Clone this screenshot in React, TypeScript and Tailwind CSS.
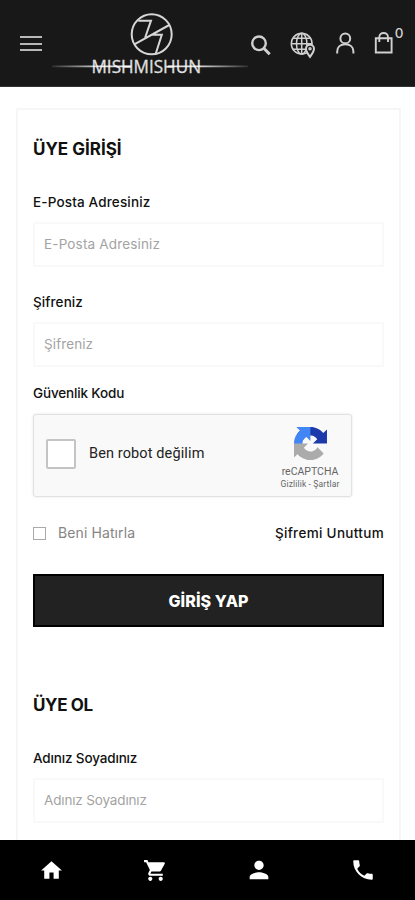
import type { ReactNode } from 'react';
import { MdHome, MdShoppingCart, MdPerson, MdPhone } from 'react-icons/md';

function Logo() {
  return (
    <svg width="196" height="86" viewBox="52 0 196 86" fill="none" className="shrink-0">
      <defs>
        <linearGradient id="streak" x1="52" x2="248" y1="0" y2="0" gradientUnits="userSpaceOnUse">
          <stop offset="0" stopColor="#fff" stopOpacity="0.1" />
          <stop offset="0.25" stopColor="#fff" stopOpacity="0.85" />
          <stop offset="0.75" stopColor="#fff" stopOpacity="0.85" />
          <stop offset="1" stopColor="#fff" stopOpacity="0.1" />
        </linearGradient>
      </defs>
      <g stroke="#d6d6d6" strokeWidth="2">
        <circle cx="151.7" cy="34.3" r="20" />
        <path d="M134.3 44.3L169.3 25M138.3 20.7H151L145 38M152 34.7H161.8L155.8 53.5" />
      </g>
      <text
        x="91.5"
        y="72.5"
        textLength="109.5"
        lengthAdjust="spacingAndGlyphs"
        fill="#e0e0e0"
        stroke="#e0e0e0"
        strokeWidth="0.3"
        fontSize="18"
        fontFamily='"Open Sans", sans-serif'
      >
        MISHMISHUN
      </text>
      <path d="M52 65.6H131V67.2H52zM168 65.6H248V67.2H168z" fill="url(#streak)" />
    </svg>
  );
}

function Header() {
  return (
    <header className="flex h-[87px] shrink-0 items-start border-b border-[#333] bg-[#181818]">
      <button className="mt-9 ml-5 flex w-[22px] flex-col gap-[4.5px]" aria-label="Menu">
        <span className="h-[2px] w-full bg-[#b8b8b8]" />
        <span className="h-[2px] w-full bg-[#b8b8b8]" />
        <span className="h-[2px] w-full bg-[#b8b8b8]" />
      </button>
      <div className="ml-[10px]">
        <Logo />
      </div>
      <div className="mt-[31px] ml-[2px] flex items-start text-[#d0d0d0]">
        <svg width="22" height="26" viewBox="250 31 22 26" fill="none" stroke="currentColor">
          <circle cx="259" cy="43.3" r="6.8" strokeWidth="2.4" />
          <path d="M264 48.5L269.7 54.2" strokeWidth="3" />
        </svg>
        <svg width="28" height="28" viewBox="289 31 28 28" fill="none" stroke="currentColor" strokeWidth="1.5" className="ml-[17px]">
          <circle cx="301.7" cy="43.7" r="10.4" />
          <ellipse cx="301.7" cy="43.7" rx="5.2" ry="10.4" />
          <path d="M301.7 33V54.3M291.4 43.7H312M293.3 38.3H310.2M293.3 49.2H310.2" />
          <path
            d="M310 56.8C308.300 54.5 306 51.8 306 48.800A4 4 0 0 1 314 48.800C314 51.8 311.700 54.5 310 56.8Z"
            fill="#181818"
            strokeWidth="2"
          />
          <circle cx="310" cy="48.8" r="1" />
        </svg>
        <svg width="20" height="26" viewBox="335 31 20 26" fill="none" stroke="currentColor" strokeWidth="2" className="ml-[18px]">
          <circle cx="345.3" cy="38.4" r="4.9" />
          <path d="M337.200 53.500V51.500C337.200 47 340.500 44.300 345.300 44.300S353.400 47 353.400 51.500V53.500" />
        </svg>
        <svg width="20" height="26" viewBox="374 31 20 26" fill="none" stroke="currentColor" strokeWidth="1.9" className="ml-[19px]">
          <path d="M375.8 38.2H391.6V52.500H375.800z" />
          <path d="M379.3 42V37.2C379.3 31.5 388 31.5 388 37.2V42" />
        </svg>
        <span className="-mt-[8px] w-[10px] text-center font-['Inter',sans-serif] text-[13.5px] leading-5 font-medium">0</span>
      </div>
    </header>
  );
}

function Title({ children, className }: { children: ReactNode; className: string }) {
  return <h2 className={`h-6 text-[17px] leading-6 font-bold whitespace-nowrap ${className}`}>{children}</h2>;
}

function Field({ label, className, textClass }: { label: string; className: string; textClass: string }) {
  return (
    <div className={`${className} ${textClass}`}>
      <label className="block h-5 text-[13.5px] leading-5 font-medium whitespace-nowrap">{label}</label>
      <input
        placeholder={label}
        className="mt-[10px] block h-[45px] w-full border-2 border-[#f9f9f9] bg-white px-[9px] pb-[2px] text-[13.5px] placeholder:text-[#a3a3a3]"
      />
    </div>
  );
}

function Captcha() {
  return (
    <div className="mt-[11px] flex h-[83px] w-[319px] rounded-[3px] border border-[#e2e2e2] bg-[#f9f9f9] font-['Roboto',sans-serif] shadow-[0_0_3px_rgba(0,0,0,0.1)]">
      <span className="mt-[24px] ml-[12px] size-[30px] rounded-[2px] border-2 border-[#c4c4c4] bg-white" />
      <span className="mt-[29px] ml-[13px] flex-1 text-[14.5px] leading-5 tracking-[0.12px] whitespace-nowrap text-[#222]">
        Ben robot değilim
      </span>
      <div className="mr-[8px] flex w-[66px] flex-col items-center text-[#666]">
        <svg width="33" height="33" viewBox="0 0 64 64" className="mt-[12px]">
          <path
            d="M64 31.955l-.033-1.37V4.687l-7.16 7.16C50.948 4.674 42.033.093 32.05.093c-10.4 0-19.622 4.96-25.458 12.64l11.736 11.86a15.55 15.55 0 0 1 4.754-5.334c2.05-1.6 4.952-2.906 8.968-2.906.485 0 .86.057 1.135.163 4.976.393 9.288 3.14 11.828 7.124l-8.307 8.307L64 31.953"
            fill="#1c3aa9"
          />
          <path
            d="M31.862.094l-1.37.033H4.594l7.16 7.16C4.58 13.147 0 22.06 0 32.046c0 10.4 4.96 19.622 12.64 25.458L24.5 45.768a15.55 15.55 0 0 1-5.334-4.754c-1.6-2.05-2.906-4.952-2.906-8.968 0-.485.057-.86.163-1.135.393-4.976 3.14-9.288 7.124-11.828l8.307 8.307L31.86.095"
            fill="#4285f4"
          />
          <path
            d="M.001 32.045l.033 1.37v25.898l7.16-7.16c5.86 7.173 14.774 11.754 24.76 11.754 10.4 0 19.622-4.96 25.458-12.64l-11.736-11.86a15.55 15.55 0 0 1-4.754 5.334c-2.05 1.6-4.952 2.906-8.968 2.906-.485 0-.86-.057-1.135-.163-4.976-.393-9.288-3.14-11.828-7.124l8.307-8.307c-10.522.04-22.4.066-27.295-.005"
            fill="#ababab"
          />
        </svg>
        <span className="mt-[5px] text-[10.5px] leading-[14px]">reCAPTCHA</span>
        <span className="text-[8.5px] leading-[11px] tracking-[0.15px] whitespace-nowrap">Gizlilik - Şartlar</span>
      </div>
    </div>
  );
}

function BottomNav() {
  return (
    <nav className="grid h-[60px] shrink-0 grid-cols-4 items-center justify-items-center bg-black text-white">
      <MdHome size={25} />
      <MdShoppingCart size={25} />
      <MdPerson size={28} />
      <MdPhone size={26} />
    </nav>
  );
}

export default function App() {
  return (
    <div className="flex h-[900px] w-[415px] flex-col overflow-hidden bg-white font-['Inter',sans-serif] text-[#111]">
      <Header />
      <main className="min-h-0 flex-1 overflow-hidden pt-[21px] pr-[14px] pl-4">
        <div className="h-[760px] border-2 border-[#f6f6f6] pr-[15px] pl-[15px]">
          <Title className="mt-[27px]">ÜYE GİRİŞİ</Title>
          <Field label="E-Posta Adresiniz" className="mt-[31px]" textClass="tracking-[0.16px]" />
          <Field label="Şifreniz" className="mt-[25px]" textClass="tracking-[0.1px]" />
          <label className="mt-4 block h-5 text-[13.5px] leading-5 font-medium tracking-[-0.15px]">Güvenlik Kodu</label>
          <Captcha />
          <div className="mt-[26px] flex h-5 items-center text-[14px] leading-5 whitespace-nowrap">
            <span className="size-[13px] border border-[#aaa]" />
            <span className="ml-3 flex-1 tracking-[0.1px] text-[#858585]">Beni Hatırla</span>
            <a className="text-[13.5px] font-medium tracking-[0.32px]">Şifremi Unuttum</a>
          </div>
          <button className="mt-[31px] block h-[53px] w-full border-2 border-black bg-[#222] text-[16px] font-extrabold tracking-[0.1px] text-white">
            GİRİŞ YAP
          </button>
          <Title className="mt-[66px] tracking-[-0.35px]">ÜYE OL</Title>
          <Field label="Adınız Soyadınız" className="mt-[31px]" textClass="tracking-[-0.15px]" />
        </div>
      </main>
      <BottomNav />
    </div>
  );
}
